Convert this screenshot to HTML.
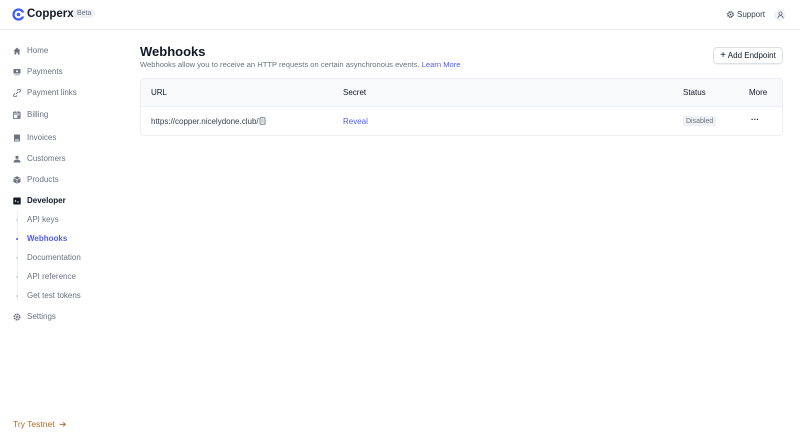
<!DOCTYPE html>
<html><head><meta charset="utf-8"><style>
*{margin:0;padding:0;box-sizing:border-box}
svg{display:block}
body{width:800px;height:442px;background:#fff;font-family:"Liberation Sans",sans-serif;position:relative;overflow:hidden;color:#374151}
.hdr{position:absolute;left:0;top:0;width:800px;height:30px;border-bottom:1px solid #eceef1}
.abs{position:absolute;white-space:nowrap}
.nav{position:absolute;left:27px;font-size:8px;color:#6b7280;line-height:10px}
.ic{position:absolute;left:13px;width:8px;height:8px}
.sub{position:absolute;left:27px;font-size:8px;color:#6b7280;line-height:10px}
.dot{position:absolute;left:16px;width:2px;height:2px;border-radius:1px;background:#d1d5db}
</style></head><body>
<div class="hdr"></div>
<svg class="abs" style="left:12px;top:8px" width="13" height="13" viewBox="0 0 13 13"><circle cx="6.5" cy="6.5" r="5" fill="none" stroke="#3b5bfd" stroke-width="2.2"/><rect x="9" y="4.5" width="4" height="4" fill="#fff"/><circle cx="6.5" cy="6.5" r="1.8" fill="#3b5bfd"/></svg>
<div class="abs" style="left:27px;top:8px;font-size:11.5px;font-weight:bold;color:#111827">Copperx</div>
<div class="abs" style="left:73px;top:9px;font-size:7px;color:#6b7280;background:#eef0f5;border-radius:5px;padding:1px 4px">Beta</div>
<svg class="abs" style="left:727px;top:11px" width="7" height="7" viewBox="0 0 8 8"><circle cx="4" cy="4" r="3" fill="none" stroke="#374151" stroke-width="1.8" stroke-dasharray="1.5 0.8"/><circle cx="4" cy="4" r="1" fill="#374151"/></svg>
<div class="abs" style="left:737px;top:10px;font-size:8px;color:#374151">Support</div>
<div class="abs" style="left:774px;top:9px;width:12px;height:12px;border-radius:6px;background:#f3f4f6"></div>
<svg class="abs" style="left:777px;top:11px" width="7" height="8" viewBox="0 0 7 8"><circle cx="3.5" cy="2.5" r="1.6" fill="none" stroke="#6b7280" stroke-width=".8"/><path d="M0.8 7.5c0-2 1.2-2.8 2.7-2.8s2.7.8 2.7 2.8" fill="none" stroke="#6b7280" stroke-width=".8"/></svg>

<div class="ic" style="top:47px"><svg width="8" height="8" viewBox="0 0 8 8"><path d="M4 0.5L0.5 4H1.5V7.5H3.2V5.5H4.8V7.5H6.5V4H7.5Z" fill="#6b7280"/></svg></div>
<div class="nav" style="top:46px">Home</div>
<div class="ic" style="top:68px"><svg width="8" height="8" viewBox="0 0 8 8"><rect x="0.5" y="1" width="7" height="4.5" fill="#6b7280"/><rect x="1.5" y="6.3" width="5" height="1" fill="#9ca3af"/><circle cx="4" cy="3.2" r="1" fill="#fff"/></svg></div>
<div class="nav" style="top:67px">Payments</div>
<div class="ic" style="top:89px"><svg width="8" height="8" viewBox="0 0 8 8"><path d="M3 5L5 3M2 4.5L1 5.5a1.4 1.4 0 002 2L4 6.5M6 3.5L7 2.5a1.4 1.4 0 00-2-2L4 1.5" fill="none" stroke="#6b7280" stroke-width=".9"/></svg></div>
<div class="nav" style="top:88px">Payment links</div>
<div class="ic" style="top:111px"><svg width="8" height="8" viewBox="0 0 8 8"><rect x="0.6" y="1.2" width="6.5" height="6.2" fill="none" stroke="#6b7280" stroke-width=".9"/><path d="M0.6 3H7.1M2.2 0.3V2M5.5 0.3V2" stroke="#6b7280" stroke-width=".9"/><circle cx="5.5" cy="5.6" r="1.3" fill="#6b7280"/></svg></div>
<div class="nav" style="top:110px">Billing</div>
<div class="ic" style="top:134px"><svg width="8" height="8" viewBox="0 0 8 8"><rect x="1" y="0.5" width="6" height="7" rx=".7" fill="#6b7280"/><rect x="2" y="5.5" width="4" height="1" fill="#fff"/></svg></div>
<div class="nav" style="top:133px">Invoices</div>
<div class="ic" style="top:155px"><svg width="8" height="8" viewBox="0 0 8 8"><circle cx="4" cy="2.3" r="1.6" fill="#6b7280"/><path d="M0.5 7.5c0-2 1.5-3 3.5-3s3.5 1 3.5 3z" fill="#6b7280"/></svg></div>
<div class="nav" style="top:154px">Customers</div>
<div class="ic" style="top:176px"><svg width="8" height="8" viewBox="0 0 8 8"><path d="M4 0.3L7.5 2v4L4 7.7 0.5 6V2z" fill="#6b7280"/><path d="M0.5 2L4 3.7 7.5 2M4 3.7V7.7" stroke="#fff" stroke-width=".6" fill="none"/></svg></div>
<div class="nav" style="top:175px">Products</div>
<div class="ic" style="top:197px"><svg width="8" height="8" viewBox="0 0 8 8"><rect x="0.3" y="0.5" width="7.4" height="7" rx=".8" fill="#111827"/><path d="M2 3L3 4 2 5M4 5H6" stroke="#fff" stroke-width=".7" fill="none"/></svg></div>
<div class="nav" style="top:196px;color:#111827;font-weight:bold">Developer</div>
<div class="abs" style="left:16.5px;top:210px;width:1px;height:90px;background:#eceef1"></div>
<div class="dot" style="top:219px"></div><div class="sub" style="top:215px">API keys</div>
<div class="dot" style="top:238px;background:#4f5df5"></div><div class="sub" style="top:234px;color:#4f5df5;font-weight:bold">Webhooks</div>
<div class="dot" style="top:257px"></div><div class="sub" style="top:253px">Documentation</div>
<div class="dot" style="top:276px"></div><div class="sub" style="top:272px">API reference</div>
<div class="dot" style="top:295px"></div><div class="sub" style="top:291px">Get test tokens</div>
<div class="ic" style="top:313px"><svg width="8" height="8" viewBox="0 0 8 8"><circle cx="4" cy="4" r="2.7" fill="none" stroke="#6b7280" stroke-width="1.8" stroke-dasharray="1.4 0.7"/><circle cx="4" cy="4" r="1" fill="#6b7280"/></svg></div>
<div class="nav" style="top:312px">Settings</div>
<div class="abs" style="left:13px;top:419px;font-size:8.5px;color:#b0692e">Try Testnet &nbsp;➔</div>

<div class="abs" style="left:140px;top:44px;font-size:13px;font-weight:bold;color:#111827">Webhooks</div>
<div class="abs" style="left:140px;top:60px;font-size:7.6px;color:#6b7280">Webhooks allow you to receive an HTTP requests on certain asynchronous events. <span style="color:#4f5df5">Learn More</span></div>
<div class="abs" style="left:713px;top:47px;width:70px;height:17px;border:1px solid #dde0e5;border-radius:4px;box-shadow:0 1px 1px rgba(0,0,0,.06);font-size:8px;color:#111827;line-height:15px;text-align:center"><span style="font-size:10px">+</span> Add Endpoint</div>
<div class="abs" style="left:140px;top:78px;width:643px;height:58px;border:1px solid #eceef1;border-radius:4px;overflow:hidden">
<div style="height:28px;background:#f7f9fb;border-bottom:1px solid #eceef1"></div></div>
<div class="abs" style="left:151px;top:88px;font-size:8px;color:#111827">URL</div>
<div class="abs" style="left:343px;top:88px;font-size:8px;color:#111827">Secret</div>
<div class="abs" style="left:683px;top:88px;font-size:8px;color:#111827">Status</div>
<div class="abs" style="left:749px;top:88px;font-size:8px;color:#111827">More</div>
<div class="abs" style="left:151px;top:117px;font-size:8px;color:#374151">https://copper.nicelydone.club/</div>
<svg class="abs" style="left:259px;top:117px" width="7" height="8" viewBox="0 0 7 8"><rect x="1" y="0.7" width="5" height="6.6" rx=".8" fill="none" stroke="#6b7280" stroke-width=".9"/><path d="M2.3 3H4.7M2.3 5H4.7" stroke="#6b7280" stroke-width=".7"/></svg>
<div class="abs" style="left:343px;top:117px;font-size:8px;color:#4f5df5;z-index:5">Reveal</div>
<div class="abs" style="left:683px;top:116px;font-size:7px;color:#6b7280;background:#eef0f4;border-radius:2px;padding:1.5px 3px">Disabled</div>
<div class="abs" style="left:751px;top:115px;font-size:8px;color:#111827;font-weight:bold">···</div>
</body></html>
